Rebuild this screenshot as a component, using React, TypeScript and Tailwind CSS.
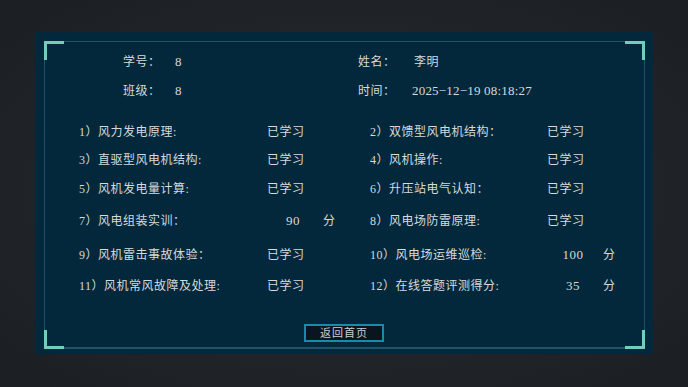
import React from "react";

type Item = { no: string; label: string; status?: string; score?: number };

const rows: { left: Item; right: Item; gap: string }[] = [
  { left: { no: "1", label: "风力发电原理:", status: "已学习" }, right: { no: "2", label: "双馈型风电机结构：", status: "已学习" }, gap: "mt-[21px]" },
  { left: { no: "3", label: "直驱型风电机结构:", status: "已学习" }, right: { no: "4", label: "风机操作:", status: "已学习" }, gap: "mt-[8px]" },
  { left: { no: "5", label: "风机发电量计算:", status: "已学习" }, right: { no: "6", label: "升压站电气认知：", status: "已学习" }, gap: "mt-[9px]" },
  { left: { no: "7", label: "风电组装实训：", score: 90 }, right: { no: "8", label: "风电场防雷原理:", status: "已学习" }, gap: "mt-[12px]" },
  { left: { no: "9", label: "风机雷击事故体验：", status: "已学习" }, right: { no: "10", label: "风电场运维巡检:", score: 100 }, gap: "mt-[14px]" },
  { left: { no: "11", label: "风机常风故障及处理:", status: "已学习" }, right: { no: "12", label: "在线答题评测得分:", score: 35 }, gap: "mt-[11px]" },
];

function Result({ item, width }: { item: Item; width: string }) {
  if (item.score !== undefined) {
    return (
      <div className={`flex items-center ${width}`}>
        <span className="w-[52px] text-center text-[13px]">{item.score}</span>
        <span className="ml-[4px]">分</span>
      </div>
    );
  }
  return <div className={width}>{item.status}</div>;
}

function Label({ item, width }: { item: Item; width: string }) {
  return (
    <div className={`${width} whitespace-nowrap`}>
      {item.no}）{item.label}
    </div>
  );
}

export default function App() {
  return (
    <div
      className="w-[688px] h-[387px] overflow-hidden bg-[radial-gradient(ellipse_at_center,#2a2f35_0%,#1f2328_70%,#1b1e22_100%)] pt-[32px] pl-[35px]"
      style={{ fontFamily: '"Liberation Serif", "Noto Sans CJK SC", serif' }}
    >
      <div className="relative w-[618px] h-[322px] bg-[#03283b] text-[12px] leading-[20px] tracking-[0.5px] text-[#d5dadd]">
        {/* frame */}
        <div className="absolute left-[9px] top-[9px] right-[8px] bottom-[5px] border border-b-2 border-[#1f5468]" />
        <div className="absolute left-[9px] top-[9px] w-[20px] h-[19px] border-t-[3px] border-l-[3px] border-[#74cdb8]" />
        <div className="absolute right-[8px] top-[9px] w-[20px] h-[19px] border-t-[3px] border-r-[3px] border-[#74cdb8]" />
        <div className="absolute left-[9px] bottom-[5px] w-[20px] h-[19px] border-b-[3px] border-l-[3px] border-[#74cdb8]" />
        <div className="absolute right-[8px] bottom-[5px] w-[20px] h-[19px] border-b-[3px] border-r-[3px] border-[#74cdb8]" />

        <div className="relative pt-[20px]">
          {/* header */}
          <div className="flex h-[20px] pl-[88px]">
            <div className="w-[52px]">学号：</div>
            <div className="w-[183px] text-[13px]">8</div>
            <div className="w-[56px]">姓名：</div>
            <div>李明</div>
          </div>
          <div className="flex h-[20px] pl-[88px] mt-[9px]">
            <div className="w-[52px]">班级：</div>
            <div className="w-[183px] text-[13px]">8</div>
            <div className="w-[54px]">时间：</div>
            <div className="text-[13px] tracking-[0.2px]">2025−12−19 08:18:27</div>
          </div>

          {/* items */}
          {rows.map((r) => (
            <div key={r.left.no} className={`flex items-center h-[20px] pl-[44px] ${r.gap}`}>
              <Label item={r.left} width="w-[188px]" />
              <Result item={r.left} width="w-[103px]" />
              <Label item={r.right} width="w-[177px]" />
              <Result item={r.right} width="w-[90px]" />
            </div>
          ))}

          <div className="flex justify-center mt-[28px]">
            <button className="w-[80px] h-[18px] bg-[#0a1520] border-2 border-[#1a8aab] text-[11px] leading-[14px] tracking-[1px] text-[#c9ced2]">
              返回首页
            </button>
          </div>
        </div>
      </div>
    </div>
  );
}
